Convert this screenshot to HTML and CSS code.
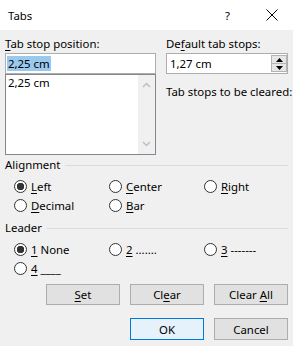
FILE: index.html
```html
<!DOCTYPE html>
<html>
<head>
    <meta charset="utf-8">
    <title>Tabs</title>
    <link rel="stylesheet" href="styles.css">
</head>
<body>
    <div class="dialog">
        <div class="titlebar">
            <span class="title">Tabs</span>
            <span class="help">?</span>
            <span class="close">
                <svg width="12" height="12" viewBox="0 0 12 12"><path d="M0.5 0.5L11.5 11.5M11.5 0.5L0.5 11.5" stroke="#000" stroke-width="1" fill="none"/></svg>
            </span>
        </div>

        <div class="content">
            <div class="top">
                <div class="col">
                    <div class="label"><u>T</u>ab stop position:</div>
                    <div class="textbox"><span class="selected">2,25 cm</span></div>
                    <div class="listbox">
                        <div class="items">
                            <div class="item">2,25 cm</div>
                        </div>
                        <div class="scrollbar">
                            <svg width="9" height="6" viewBox="0 0 9 6"><path d="M1 5L4.5 1.5L8 5" stroke="#bfbfbf" stroke-width="1.5" fill="none"/></svg>
                            <svg width="9" height="6" viewBox="0 0 9 6"><path d="M1 1L4.5 4.5L8 1" stroke="#bfbfbf" stroke-width="1.5" fill="none"/></svg>
                        </div>
                    </div>
                </div>
                <div class="col">
                    <div class="label">De<u>f</u>ault tab stops:</div>
                    <div class="textbox spin">
                        <span class="value">1,27 cm</span>
                        <span class="spinner">
                            <span class="spin-btn"><svg width="7" height="4" viewBox="0 0 7 4"><path d="M0 4L3.5 0L7 4Z" fill="#000"/></svg></span>
                            <span class="spin-btn"><svg width="7" height="4" viewBox="0 0 7 4"><path d="M0 0L3.5 4L7 0Z" fill="#000"/></svg></span>
                        </span>
                    </div>
                    <div class="label cleared">Tab stops to be cleared:</div>
                </div>
            </div>

            <div class="group-head">Alignment</div>
            <div class="options">
                <div class="radio"><span class="dot checked"></span><span><u>L</u>eft</span></div>
                <div class="radio"><span class="dot"></span><span><u>C</u>enter</span></div>
                <div class="radio"><span class="dot"></span><span><u>R</u>ight</span></div>
                <div class="radio"><span class="dot"></span><span><u>D</u>ecimal</span></div>
                <div class="radio"><span class="dot"></span><span><u>B</u>ar</span></div>
            </div>

            <div class="group-head leader">Leader</div>
            <div class="options">
                <div class="radio"><span class="dot checked"></span><span><u>1</u> None</span></div>
                <div class="radio"><span class="dot"></span><span><u>2</u> .......</span></div>
                <div class="radio"><span class="dot"></span><span><u>3</u> -------</span></div>
                <div class="radio"><span class="dot"></span><span><u>4</u> ____</span></div>
            </div>

            <div class="buttons">
                <button class="button"><u>S</u>et</button>
                <button class="button">Cl<u>e</u>ar</button>
                <button class="button">Clear <u>A</u>ll</button>
            </div>
            <div class="buttons last">
                <button class="button default">OK</button>
                <button class="button">Cancel</button>
            </div>
        </div>
    </div>
</body>
</html>
```

FILE: styles.css
```css
body {
    margin: 0;
    padding: 0;
    background: #f0f0f0;
    font-family: "Noto Sans", "DejaVu Sans", sans-serif;
    font-size: 11.4px;
    color: #000;
}
u {
    text-decoration-thickness: 1px;
    text-underline-offset: 2px;
}
.dialog {
    width: 293px;
    height: 346px;
    overflow: hidden;
}
.titlebar {
    height: 30px;
    background: #fff;
    display: flex;
    align-items: center;
    padding-left: 8px;
}
.help {
    margin-left: auto;
    margin-right: 36px;
}
.close {
    display: flex;
    margin-right: 15px;
}
.content {
    padding: 6px 5px 0 5px;
}
.top {
    display: grid;
    grid-template-columns: 151px 122px; /* left list, right spinner */
    column-gap: 10px;
}
.label {
    line-height: 16px;
    height: 16px;
    white-space: nowrap;
}
.textbox {
    margin-top: 1px;
    height: 21px;
    box-sizing: border-box;
    border: 1px solid #adadad;
    background: #fff;
    padding-left: 1px;
    line-height: 19px;
}
.selected {
    display: inline-block;
    line-height: 15px;
    padding: 0 1px;
    background: #99c9ef;
}
.listbox {
    height: 81px;
    box-sizing: border-box;
    border: 1px solid #828790;
    background: #fff;
    display: flex;
}
.items {
    flex-grow: 1;
    padding-left: 2px;
    line-height: 16px;
}
.scrollbar {
    width: 17px;
    background: #f0f0f0;
    display: flex;
    flex-direction: column;
    justify-content: space-between;
    align-items: center;
    padding: 7px 0 7px;
}
.spin {
    display: flex;
    padding-left: 3px;
}
.spin .value {
    flex-grow: 1;
}
.spinner {
    width: 16px;
    display: flex;
    flex-direction: column;
    padding: 1px 0;
}
.spin-btn {
    flex: 1;
    display: flex;
    align-items: center;
    justify-content: center;
    background: #e6e6e6;
    border: 1px solid #b4b4b4;
}
.spin-btn + .spin-btn {
    border-top: none;
}
.cleared {
    margin-top: 10px;
}
.group-head {
    display: flex;
    align-items: center;
    gap: 5px;
    line-height: 16px;
    margin-top: 2px;
}
.group-head::after {
    content: "";
    flex-grow: 1;
    border-top: 1px solid #dcdcdc;
}
.group-head.leader {
    margin-top: 5px;
}
.options {
    display: grid;
    grid-template-columns: 95px 95px 1fr;
    grid-auto-rows: 19px;
    padding-left: 9px;
    margin-top: 4px;
}
.radio {
    display: flex;
    align-items: center;
    gap: 4px;
    white-space: nowrap;
}
.dot {
    width: 13px;
    height: 13px;
    box-sizing: border-box;
    border: 1px solid #333;
    border-radius: 50%;
    background: #fff;
}
.dot.checked {
    background: radial-gradient(circle, #333 0 3.5px, #fff 4px);
}
.buttons {
    display: flex;
    justify-content: flex-end;
    gap: 10px;
    margin-top: 6px;
}
.buttons.last {
    margin-top: 13px;
}
.button {
    width: 74px;
    height: 21px;
    padding: 0;
    font-family: inherit;
    font-size: inherit;
    color: #000;
    background: #e1e1e1;
    border: 1px solid #adadad;
}
.buttons.last .button {
    height: 22px;
}
.button.default {
    background: #e5f1fb;
    border-color: #0078d7;
}
```
